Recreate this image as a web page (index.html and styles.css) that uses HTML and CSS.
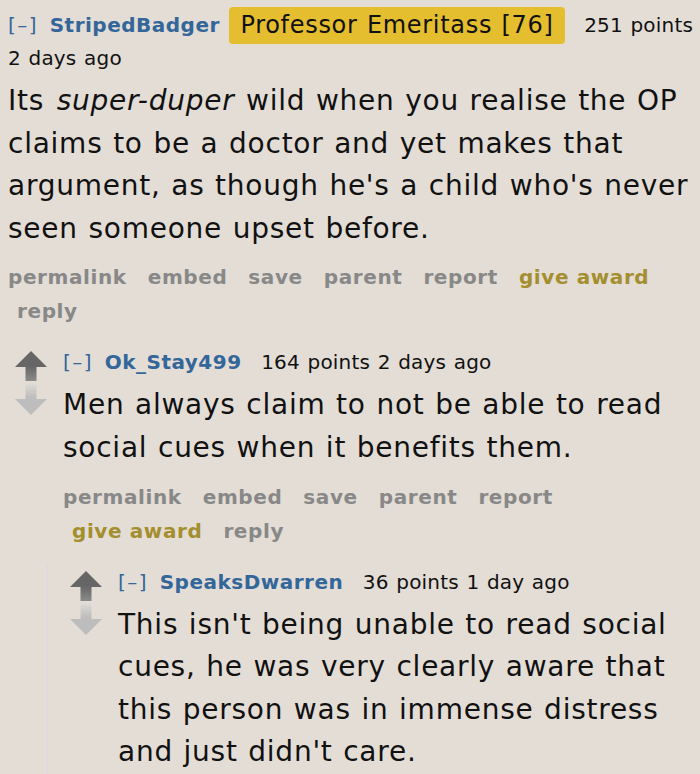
FILE: index.html
```html
<!DOCTYPE html>
<html lang="en">
<head>
  <meta charset="UTF-8" />
  <meta name="viewport" content="width=device-width, initial-scale=1.0"/>
  <title>Comment thread</title>
  <link rel="stylesheet" href="styles.css">
</head>
<body>

  <div class="comment root">
    <div class="entry">
      <p class="tagline">
        <a href="#" class="expand">[–]</a>
        <a href="#" class="author">StripedBadger</a>
        <span class="flair">Professor Emeritass [76]</span>
        <span class="score">251 points</span>
        <time>2 days ago</time>
      </p>
      <div class="md">
        <p>Its <em>super-duper</em> wild when you realise the OP claims to be a doctor and yet makes that argument, as though he's a child who's never seen someone upset before.</p>
      </div>
      <ul class="buttons">
        <li><a href="#">permalink</a></li>
        <li><a href="#">embed</a></li>
        <li><a href="#">save</a></li>
        <li><a href="#">parent</a></li>
        <li><a href="#">report</a></li>
        <li><a href="#" class="give-award">give award</a></li>
        <li><a href="#">reply</a></li>
      </ul>
    </div>

    <div class="child">
      <div class="comment">
        <div class="midcol">
          <svg class="arrow" width="32" height="30" viewBox="0 0 32 30">
            <defs>
              <linearGradient id="upfade" x1="0" y1="0" x2="0" y2="1">
                <stop offset="0.5" stop-color="#666"/>
                <stop offset="1" stop-color="#8a8a8a"/>
              </linearGradient>
            </defs>
            <path d="M16 0 L32 16 L21.5 16 L21.5 30 L10.5 30 L10.5 16 L0 16 Z" fill="url(#upfade)"/>
          </svg>
          <svg class="arrow" width="32" height="32" viewBox="0 0 32 32">
            <defs>
              <linearGradient id="downfade" x1="0" y1="0" x2="0" y2="1">
                <stop offset="0" stop-color="#e0dcd6"/>
                <stop offset="0.45" stop-color="#bdbdbd"/>
              </linearGradient>
            </defs>
            <path d="M10.5 0 L21.5 0 L21.5 16 L32 16 L16 32 L0 16 L10.5 16 Z" fill="url(#downfade)"/>
          </svg>
        </div>
        <div class="entry">
          <p class="tagline">
            <a href="#" class="expand">[–]</a>
            <a href="#" class="author">Ok_Stay499</a>
            <span class="score">164 points</span>
            <time>2 days ago</time>
          </p>
          <div class="md">
            <p>Men always claim to not be able to read social cues when it benefits them.</p>
          </div>
          <ul class="buttons">
            <li><a href="#">permalink</a></li>
            <li><a href="#">embed</a></li>
            <li><a href="#">save</a></li>
            <li><a href="#">parent</a></li>
            <li><a href="#">report</a></li>
            <li><a href="#" class="give-award">give award</a></li>
            <li><a href="#">reply</a></li>
          </ul>
        </div>

        <div class="child">
          <div class="comment">
            <div class="midcol">
              <svg class="arrow" width="32" height="30" viewBox="0 0 32 30">
                <path d="M16 0 L32 16 L21.5 16 L21.5 30 L10.5 30 L10.5 16 L0 16 Z" fill="url(#upfade)"/>
              </svg>
              <svg class="arrow" width="32" height="32" viewBox="0 0 32 32">
                <path d="M10.5 0 L21.5 0 L21.5 16 L32 16 L16 32 L0 16 L10.5 16 Z" fill="url(#downfade)"/>
              </svg>
            </div>
            <div class="entry">
              <p class="tagline">
                <a href="#" class="expand">[–]</a>
                <a href="#" class="author">SpeaksDwarren</a>
                <span class="score">36 points</span>
                <time>1 day ago</time>
              </p>
              <div class="md">
                <p>This isn't being unable to read social cues, he was very clearly aware that this person was in immense distress and just didn't care.</p>
              </div>
            </div>
          </div>
        </div>
      </div>
    </div>
  </div>

</body>
</html>
```

FILE: styles.css
```css
body {
  margin: 0;
  padding: 7px 6px 0 8px;
  background: #e3ddd6;
  color: #111;
  font-family: "DejaVu Sans", Verdana, sans-serif;
  overflow: hidden;
}

a {
  text-decoration: none;
}

.comment {
  display: grid;
  grid-template-columns: 48px 1fr;
  padding-top: 3px;
}

.comment.root {
  display: block;
  padding-top: 0;
}

.midcol {
  display: flex;
  flex-direction: column;
  gap: 2px;
  padding-top: 3px;
}

.arrow {
  display: block;
}

.child {
  grid-column: 2;
  margin: 17px 0 0 -16px;
  padding-left: 22px;
  border-left: 1px dotted #d4d4ee;
}

.tagline {
  margin: 0;
  font-size: 20px;
  line-height: 28px;
  letter-spacing: 0.2px;
  word-spacing: 1px;
  color: #111;
}

.tagline .score,
.tagline time {
  white-space: nowrap;
}

.expand {
  color: #369;
  margin-right: 4px;
  letter-spacing: 1.5px;
}

.author {
  color: #369;
  font-weight: bold;
  letter-spacing: 0.5px;
}

.flair {
  display: inline-block;
  margin-left: 2px;
  padding: 0 11px;
  background: #e4be2e;
  border-radius: 4px;
  font-size: 24px;
  line-height: 37px;
  letter-spacing: 0.7px;
  vertical-align: -1px;
}

.score {
  margin-left: 12px;
}

.md p {
  margin: 8px 0 0 0;
  font-size: 28px;
  line-height: 42.6px;
  letter-spacing: 0.75px;
  word-spacing: 1px;
}

.md em {
  margin: 0 1px 0 2px;
}

.buttons {
  display: flex;
  flex-wrap: wrap;
  list-style: none;
  margin: 10px 0 0 0;
  padding: 0;
  font-size: 20px;
  font-weight: bold;
  line-height: 34px;
  letter-spacing: 0.6px;
}

.buttons li {
  padding: 0 12px 0 9px;
}

.buttons li:first-child {
  padding-left: 0;
}

.buttons a {
  color: #888;
}

.buttons .give-award {
  color: #a48e2e;
}
```
